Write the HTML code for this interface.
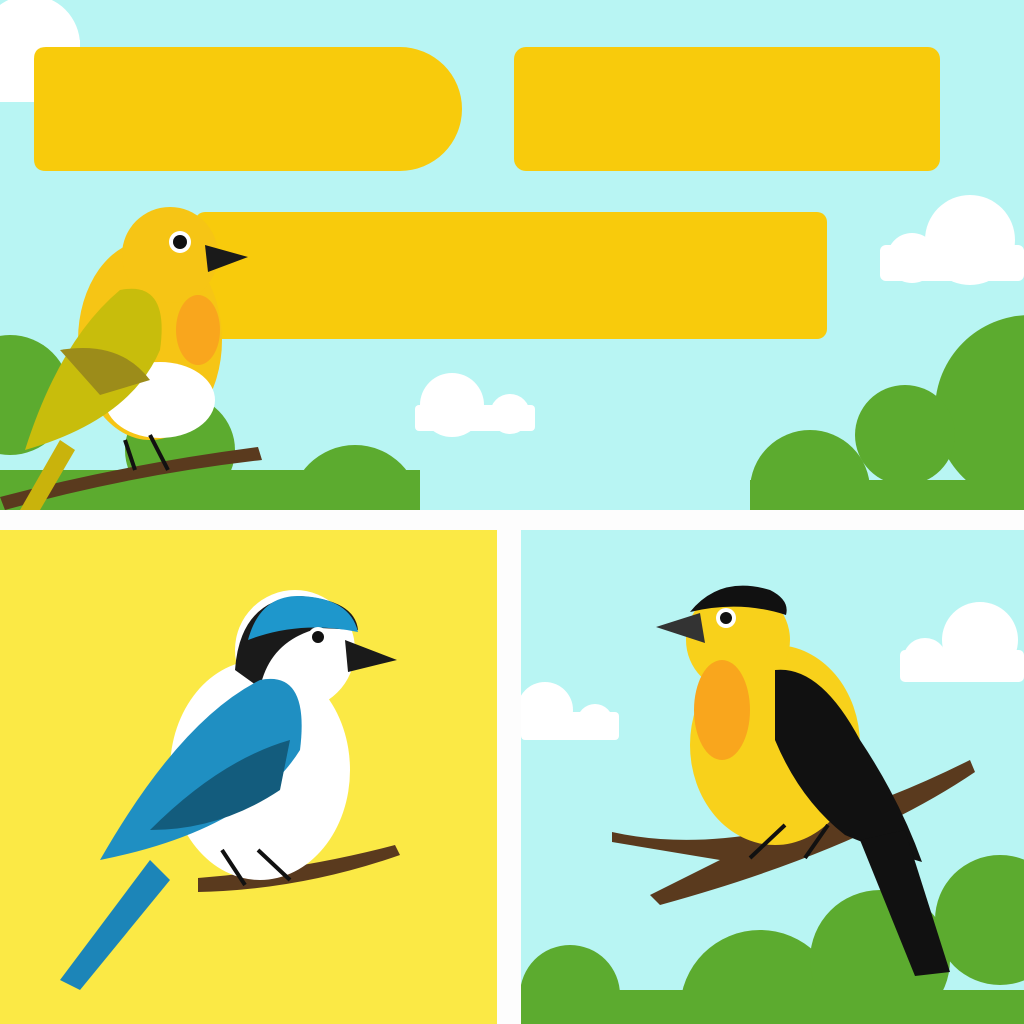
<!DOCTYPE html>
<html><head><meta charset="utf-8"><style>html,body{margin:0;padding:0;background:#fff;overflow:hidden}svg{display:block}</style></head>
<body>
<svg width="1024" height="1024" viewBox="0 0 1024 1024" xmlns="http://www.w3.org/2000/svg">
<defs>
<clipPath id="ct"><rect x="0" y="0" width="1024" height="510"/></clipPath>
<clipPath id="cl"><rect x="0" y="530" width="497" height="494"/></clipPath>
<clipPath id="cr"><rect x="521" y="530" width="503" height="494"/></clipPath>
</defs>
<rect width="1024" height="1024" fill="#fdfdfd"/>
<g clip-path="url(#ct)">
<rect x="0" y="0" width="1024" height="510" fill="#b8f5f3"/>
<g fill="#fff">
<circle cx="30" cy="45" r="50"/><rect x="0" y="40" width="80" height="62"/>
<circle cx="970" cy="240" r="45"/><circle cx="912" cy="258" r="25"/><rect x="880" y="245" width="144" height="36" rx="6"/>
<circle cx="452" cy="405" r="32"/><circle cx="510" cy="414" r="20"/><rect x="415" y="405" width="120" height="26" rx="4"/>
</g>
<g fill="#5cab2f">
<circle cx="10" cy="395" r="60"/><circle cx="180" cy="450" r="55"/><circle cx="355" cy="510" r="65"/><rect x="0" y="470" width="420" height="40"/>
<circle cx="1030" cy="410" r="95"/><circle cx="905" cy="435" r="50"/><circle cx="810" cy="490" r="60"/><rect x="750" y="480" width="274" height="30"/>
</g>
<path d="M46 47 L400 47 A62 62 0 0 1 400 171 L46 171 Q34 171 34 159 L34 59 Q34 47 46 47Z" fill="#f8cb0c"/>
<rect x="514" y="47" width="426" height="124" rx="12" fill="#f8cb0c"/>
<rect x="195" y="212" width="632" height="127" rx="10" fill="#f8cb0c"/>
<path d="M0 497 Q120 465 258 447 L262 460 Q130 475 5 510Z" fill="#5a3a1e"/>
<path d="M20 510 L60 440 L75 450 L40 510Z" fill="#c9b30c"/>
<ellipse cx="150" cy="340" rx="72" ry="100" fill="#f6c515"/>
<circle cx="170" cy="255" r="48" fill="#f6c515"/>
<ellipse cx="160" cy="400" rx="55" ry="38" fill="#fff"/>
<ellipse cx="198" cy="330" rx="22" ry="35" fill="#f9a61d"/>
<path d="M25 450 Q60 340 120 290 Q170 280 160 350 Q130 420 25 450Z" fill="#c8bd0c"/>
<path d="M60 350 Q120 340 150 380 L100 395Z" fill="#9c8c1a"/>
<path d="M205 245 L248 257 L208 272Z" fill="#1a1a1a"/>
<circle cx="180" cy="242" r="11" fill="#fff"/><circle cx="180" cy="242" r="7" fill="#111"/>
<path d="M125 440 L135 470 M150 435 L168 470" stroke="#111" stroke-width="4" fill="none"/>
</g>
<g clip-path="url(#cl)">
<rect x="0" y="530" width="497" height="494" fill="#fbe945"/>
<path d="M198 878 Q300 870 395 845 L400 855 Q300 890 198 892Z" fill="#5a3a1e"/>
<path d="M60 980 L150 860 L170 880 L80 990Z" fill="#1c85b8"/>
<ellipse cx="260" cy="770" rx="90" ry="110" fill="#fff"/>
<circle cx="295" cy="650" r="60" fill="#fff"/>
<path d="M235 670 Q240 600 300 596 Q355 600 358 630 L320 628 Q270 640 260 688Z" fill="#1a1a1a"/>
<path d="M248 640 Q260 595 300 596 Q350 598 358 632 Q300 620 248 640Z" fill="#1e97cc"/>
<path d="M100 860 Q180 720 260 680 Q310 670 300 750 Q250 830 100 860Z" fill="#1f8fc2"/>
<path d="M150 830 Q220 760 290 740 L280 790 Q220 830 150 830Z" fill="#135c7d"/>
<path d="M345 640 L397 660 L348 672Z" fill="#1a1a1a"/>
<circle cx="318" cy="637" r="10" fill="#fff"/><circle cx="318" cy="637" r="6" fill="#111"/>
<path d="M222 850 L245 885 M258 850 L290 880" stroke="#111" stroke-width="4" fill="none"/>
</g>
<g clip-path="url(#cr)">
<rect x="521" y="530" width="503" height="494" fill="#b8f5f3"/>
<g fill="#fff">
<circle cx="980" cy="640" r="38"/><circle cx="925" cy="660" r="22"/><rect x="900" y="650" width="124" height="32" rx="5"/>
<circle cx="545" cy="710" r="28"/><circle cx="595" cy="722" r="18"/><rect x="521" y="712" width="98" height="28" rx="4"/>
</g>
<g fill="#5cab2f">
<circle cx="570" cy="995" r="50"/><circle cx="760" cy="1010" r="80"/><circle cx="880" cy="960" r="70"/><circle cx="1000" cy="920" r="65"/><rect x="521" y="990" width="503" height="34"/>
</g>
<path d="M612 832 Q760 865 970 760 L975 772 Q860 850 660 905 L650 895 L720 860 Q660 850 612 842Z" fill="#5a3a1e"/>
<ellipse cx="775" cy="745" rx="85" ry="100" fill="#f8d11b"/>
<circle cx="738" cy="640" r="52" fill="#f8d11b"/>
<ellipse cx="722" cy="710" rx="28" ry="50" fill="#f9a61d"/>
<path d="M690 612 Q720 575 770 590 Q790 600 786 615 Q740 600 690 612Z" fill="#111"/>
<path d="M775 670 Q820 665 860 740 Q900 800 922 862 Q880 850 845 835 Q800 800 775 740Z" fill="#111"/>
<path d="M860 840 L905 830 L950 972 L915 976Z" fill="#111"/>
<path d="M656 627 L700 613 L705 643Z" fill="#333"/>
<circle cx="726" cy="618" r="10" fill="#fff"/><circle cx="726" cy="618" r="6" fill="#111"/>
<path d="M785 825 L750 858 M828 825 L805 858" stroke="#111" stroke-width="4" fill="none"/>
</g>
</svg>
</body></html>
